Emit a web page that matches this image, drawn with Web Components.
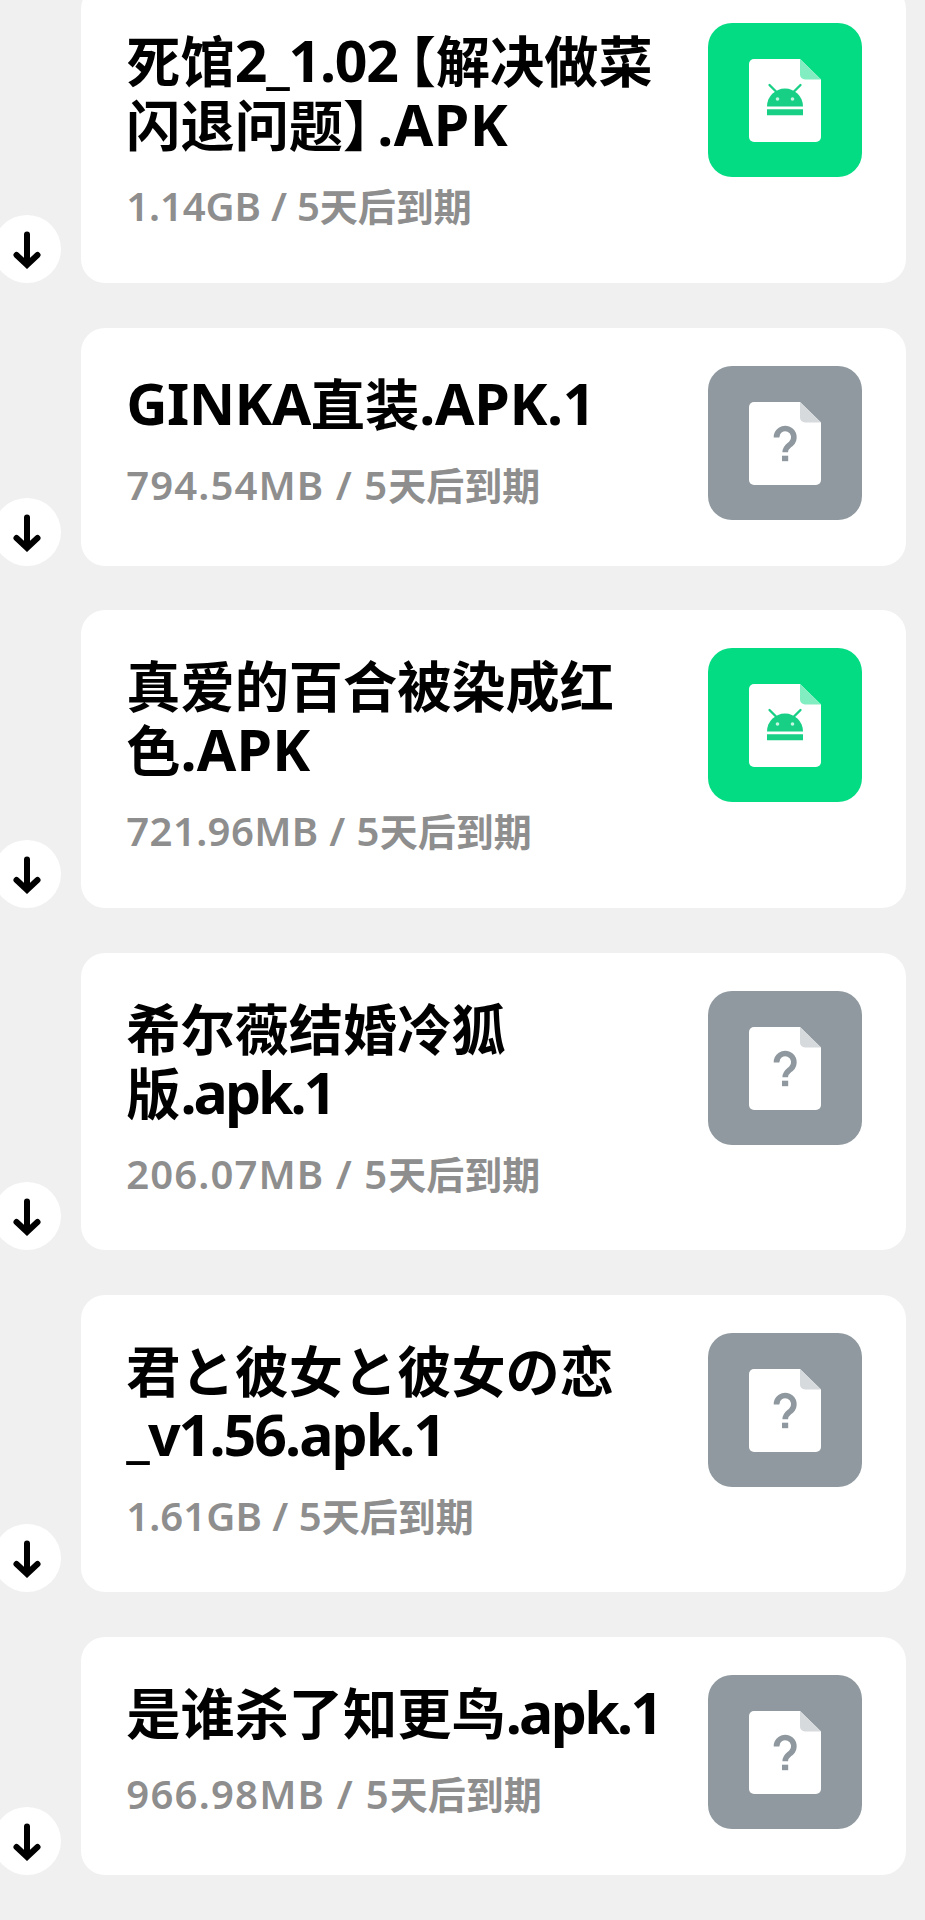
<!DOCTYPE html>
<html lang="zh-CN">
<head>
<meta charset="utf-8">
<title>文件</title>
<style>
  body {
    margin: 0;
    background: #f0f0f0;
    height: 1920px;
    overflow: hidden;
    font-family: "Noto Sans CJK SC", sans-serif;
  }
</style>
</head>
<body>
<file-list>
  <file-row tipo="apk" size="1.14GB" expira="5天后到期" anchos="163,131" ancho-meta="193.5">死馆2_1.02【解决做菜
闪退问题】.APK</file-row>
  <file-row tipo="otro" size="794.54MB" expira="5天后到期" anchos="184.5,176" ancho-meta="262">GINKA直装.APK.1</file-row>
  <file-row tipo="apk" size="721.96MB" expira="5天后到期" anchos="130" ancho-meta="253.5">真爱的百合被染成红
色.APK</file-row>
  <file-row tipo="otro" size="206.07MB" expira="5天后到期" anchos="153" ancho-meta="262">希尔薇结婚冷狐
版.apk.1</file-row>
  <file-row tipo="otro" size="1.61GB" expira="5天后到期" anchos="318" ancho-meta="195.5">君と彼女と彼女の恋
_v1.56.apk.1</file-row>
  <file-row tipo="otro" size="966.98MB" expira="5天后到期" anchos="155" ancho-meta="263.5">是谁杀了知更鸟.apk.1</file-row>
</file-list>

<script>
class FileList extends HTMLElement {
  constructor() {
    super();
    this.attachShadow({ mode: "open" }).innerHTML = `
      <style>
        :host {
          display: flex;
          flex-direction: column;
          gap: 44.7px;
          margin-top: -14.7px;
        }
      </style>
      <slot></slot>
    `;
  }
}

class FileIcon extends HTMLElement {
  connectedCallback() {
    const apk = this.getAttribute("tipo") === "apk";
    const glyph = apk
      ? `<g fill="#17cf85">
           <path d="M59 83.500a18 18 0 0 1 36 0z"/>
           <path d="M61.500 62l7 7M92.500 62l-7 7" stroke="#17cf85" stroke-width="2.300" stroke-linecap="round"/>
           <path d="M59 86.300h36v6H59z"/>
         </g>
         <circle cx="69.500" cy="76" r="1.800" fill="#c5f5e0"/>
         <circle cx="84.500" cy="76" r="1.800" fill="#c5f5e0"/>`
      : `<path d="M68.500 71.500a8.700 8.700 0 1 1 14.400 6.300c-3.300 2.800-5.700 4-5.700 8.400" fill="none" stroke="#8e989e" stroke-width="5.600"/>
         <path d="M74 89.700h6.200v5.500H74z" fill="#8e989e"/>`;
    this.attachShadow({ mode: "open" }).innerHTML = `
      <style>
        :host { display: block; width: 154px; height: 154px; flex: none; }
        svg { display: block; }
      </style>
      <svg width="154" height="154" viewBox="0 0 154 154">
        <rect width="154" height="154" rx="24" fill="${apk ? "#03dc83" : "#8f999f"}"/>
        <path d="M46 36h46l21 20.500V114a5 5 0 0 1-5 5H46a5 5 0 0 1-5-5V41a5 5 0 0 1 5-5z" fill="#fff"/>
        <path d="M92 36l21 20.500H97a5 5 0 0 1-5-5z" fill="${apk ? "#81edc1" : "#d6dadc"}"/>
        ${glyph}
      </svg>
    `;
  }
}

class FileRow extends HTMLElement {
  connectedCallback() {
    this.attachShadow({ mode: "open" }).innerHTML = `
      <style>
        :host {
          display: grid;
          grid-template-columns: 68px 825px;
          column-gap: 19.500px;
          margin-left: -6.800px;
          align-items: end;
        }
        .descargar {
          width: 68px;
          height: 68px;
          border-radius: 50%;
          background: #fff;
        }
        .tarjeta {
          display: flex;
          justify-content: space-between;
          align-items: flex-start;
          box-sizing: border-box;
          min-height: 238.300px;
          padding: 38px 44.200px 42px 45.600px;
          border-radius: 24px;
          background: #fff;
        }
        .texto {
          padding: 4px 0 7.500px;
        }
        .nombre, .meta {
          white-space: pre;
          font-weight: 700;
        }
        .nombre {
          font-size: 54.200px;
          line-height: 64px;
          color: #000;
        }
        .meta {
          margin-top: 22px;
          font-size: 38px;
          line-height: 56px;
          color: #8e8e8e;
        }
        .latin {
          font-family: "Noto Sans", sans-serif;
          font-size: 1.055em;
          line-height: 1;
        }
        .meta .latin { font-weight: 600; }
        .abre { margin-left: -16px; }
        .cierra { margin-right: -20px; }
      </style>
      <svg class="descargar" viewBox="0 0 68 68">
        <path d="M34 19.500V49M23.500 40L34 49.800L44.500 40" fill="none" stroke="#000" stroke-width="6" stroke-linecap="round"/>
      </svg>
      <div class="tarjeta">
        <div class="texto">
          <div class="nombre"></div>
          <div class="meta"></div>
        </div>
        <file-icon tipo="${this.getAttribute("tipo")}"></file-icon>
      </div>
    `;
    this.pintar(".nombre", this.textContent, this.getAttribute("anchos"));
    this.pintar(".meta", `${this.getAttribute("size")} / ${this.getAttribute("expira")}`, this.getAttribute("ancho-meta"));
  }

  // latin runs use their own face and are tracked to the given widths
  pintar(selector, texto, anchos) {
    const linea = this.shadowRoot.querySelector(selector);
    linea.innerHTML = texto
      .replace(/[\x20-\x7e]+/g, (t) => `<span class="latin">${t}</span>`)
      .replace("【", `<span class="abre">【</span>`)
      .replace("】", `<span class="cierra">】</span>`);

    const lista = anchos.split(",").map(Number);
    linea.querySelectorAll(".latin").forEach((run, i) => {
      const natural = run.getBoundingClientRect().width;
      run.style.letterSpacing = (lista[i] - natural) / run.textContent.length + "px";
    });
  }
}

customElements.define("file-list", FileList);
customElements.define("file-icon", FileIcon);
customElements.define("file-row", FileRow);
</script>
</body>
</html>
